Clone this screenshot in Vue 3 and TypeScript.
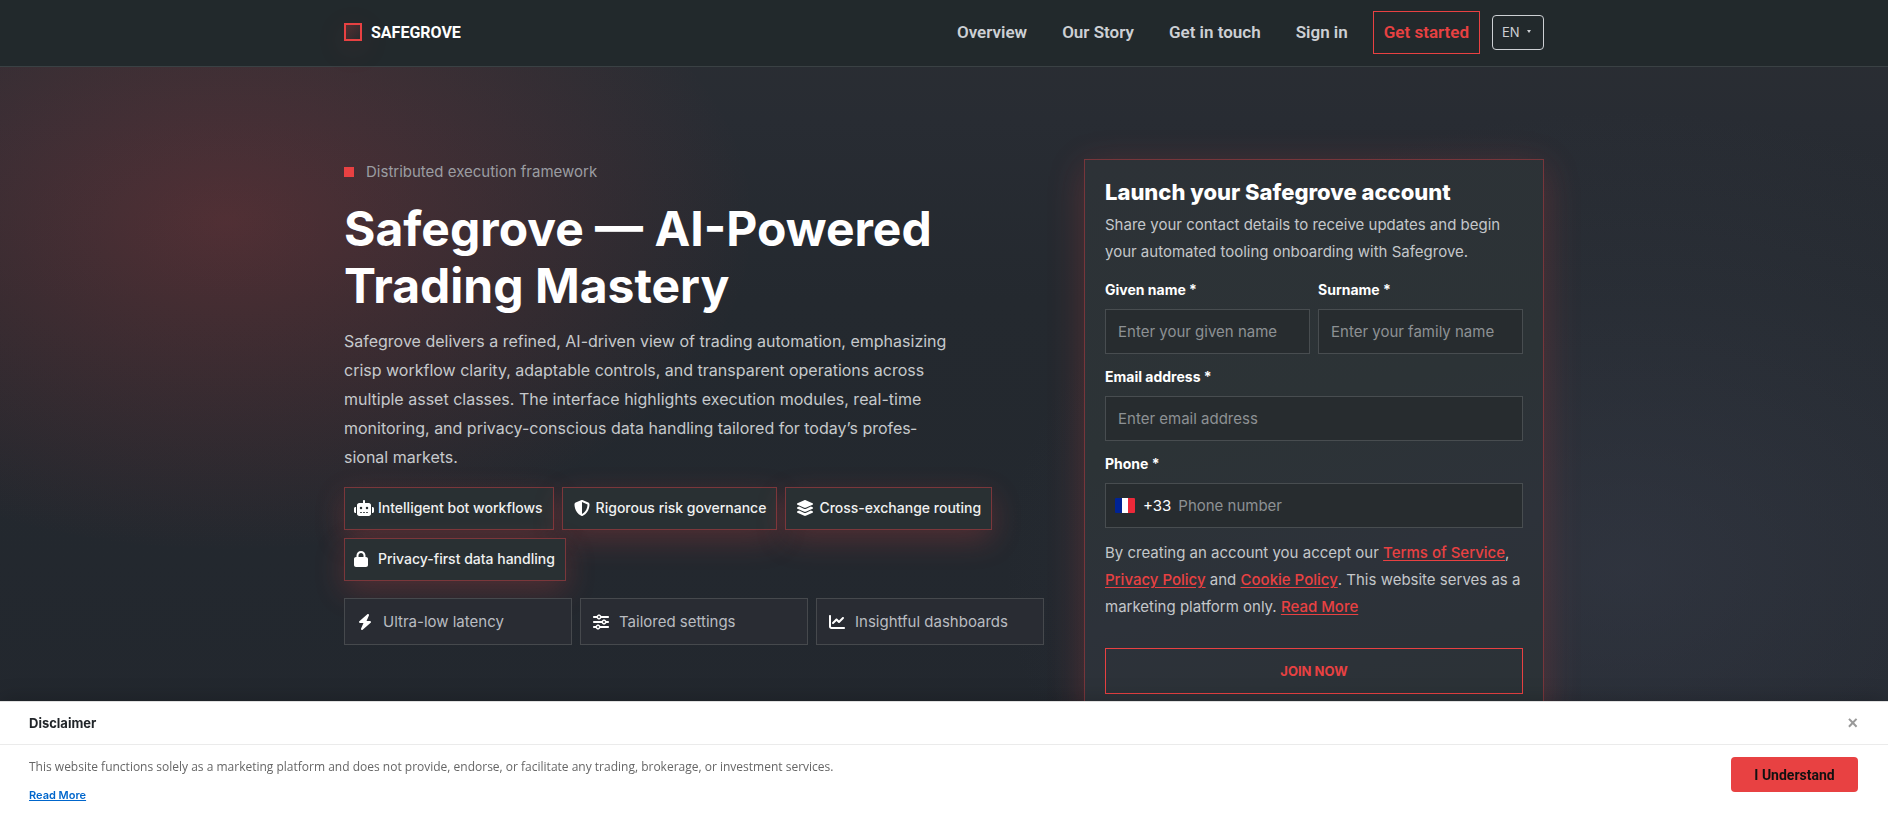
<script setup lang="ts">
import { ref } from 'vue'

interface Feature {
  label: string
  box: string
  path: string
}

const navLinks: string[] = ['Overview', 'Our Story', 'Get in touch', 'Sign in']

const chips: Feature[] = [
  {
    label: 'Intelligent bot workflows',
    box: '0 0 640 512',
    path: 'M320 0c17.7 0 32 14.3 32 32V96H472c39.8 0 72 32.2 72 72V440c0 39.8-32.2 72-72 72H168c-39.8 0-72-32.2-72-72V168c0-39.8 32.2-72 72-72H288V32c0-17.7 14.3-32 32-32zM208 384c-8.8 0-16 7.2-16 16s7.2 16 16 16h32c8.8 0 16-7.2 16-16s-7.2-16-16-16H208zm96 0c-8.8 0-16 7.2-16 16s7.2 16 16 16h32c8.8 0 16-7.2 16-16s-7.2-16-16-16H304zm96 0c-8.8 0-16 7.2-16 16s7.2 16 16 16h32c8.8 0 16-7.2 16-16s-7.2-16-16-16H400zM264 256a40 40 0 1 0 -80 0 40 40 0 1 0 80 0zm152 40a40 40 0 1 0 0-80 40 40 0 1 0 0 80zM48 224H64V416H48c-26.5 0-48-21.5-48-48V272c0-26.5 21.5-48 48-48zm544 0c26.5 0 48 21.5 48 48v96c0 26.5-21.5 48-48 48H576V224h16z',
  },
  {
    label: 'Rigorous risk governance',
    box: '0 0 512 512',
    path: 'M256 0c4.6 0 9.2 1 13.4 2.9L457.7 82.8c22 9.3 38.4 31 38.3 57.2c-.5 99.2-41.3 280.7-213.6 363.2c-16.7 8-36.1 8-52.8 0C57.3 420.7 16.5 239.2 16 140c-.1-26.2 16.3-47.9 38.3-57.2L242.7 2.9C246.8 1 251.4 0 256 0zm0 66.8V444.8C394 378 431.1 230.1 432 141.4L256 66.8l0 0z',
  },
  {
    label: 'Cross-exchange routing',
    box: '0 0 576 512',
    path: 'M264.5 5.2c14.9-6.9 32.1-6.9 47 0l218.6 101c8.5 3.9 13.9 12.4 13.9 21.8s-5.4 17.9-13.9 21.8l-218.6 101c-14.9 6.9-32.1 6.9-47 0L45.9 149.8C37.4 145.8 32 137.3 32 128s5.4-17.9 13.9-21.8L264.5 5.2zM476.9 209.6l53.2 24.6c8.5 3.9 13.9 12.4 13.9 21.8s-5.4 17.9-13.9 21.8l-218.6 101c-14.9 6.9-32.1 6.9-47 0L45.9 277.8C37.4 273.8 32 265.3 32 256s5.4-17.9 13.9-21.8l53.2-24.6 152 70.2c23.4 10.8 50.4 10.8 73.8 0l152-70.2zm-152 198.2l152-70.2 53.2 24.6c8.5 3.9 13.9 12.4 13.9 21.8s-5.4 17.9-13.9 21.8l-218.6 101c-14.9 6.9-32.1 6.9-47 0L45.9 405.8C37.4 401.8 32 393.3 32 384s5.4-17.9 13.9-21.8l53.2-24.6 152 70.2c23.4 10.8 50.4 10.8 73.8 0z',
  },
  {
    label: 'Privacy-first data handling',
    box: '0 0 640 512',
    path: 'M144 144v48H304V144c0-44.2-35.8-80-80-80s-80 35.8-80 80zM80 192V144C80 64.5 144.5 0 224 0s144 64.5 144 144v48h16c35.3 0 64 28.7 64 64V448c0 35.3-28.7 64-64 64H64c-35.3 0-64-28.7-64-64V256c0-35.3 28.7-64 64-64H80z',
  },
]

const tiles: Feature[] = [
  {
    label: 'Ultra-low latency',
    box: '0 0 448 512',
    path: 'M349.4 44.6c5.9-13.7 1.5-29.7-10.6-38.5s-28.6-8-39.9 1.8l-256 224c-10 8.8-13.6 22.9-8.9 35.3S50.7 288 64 288H175.5L98.6 467.4c-5.9 13.7-1.5 29.7 10.6 38.5s28.6 8 39.9-1.8l256-224c10-8.8 13.6-22.9 8.9-35.3s-16.6-20.7-30-20.7H272.5L349.4 44.6z',
  },
  {
    label: 'Tailored settings',
    box: '0 0 512 512',
    path: 'M0 416c0 17.7 14.3 32 32 32l54.7 0c12.3 28.3 40.5 48 73.3 48s61-19.7 73.3-48L480 448c17.7 0 32-14.3 32-32s-14.3-32-32-32l-246.7 0c-12.3-28.3-40.5-48-73.3-48s-61 19.7-73.3 48L32 384c-17.7 0-32 14.3-32 32zm128 0a32 32 0 1 1 64 0 32 32 0 1 1 -64 0zM320 256a32 32 0 1 1 64 0 32 32 0 1 1 -64 0zm32-80c-32.8 0-61 19.7-73.3 48L32 224c-17.7 0-32 14.3-32 32s14.3 32 32 32l246.7 0c12.3 28.3 40.5 48 73.3 48s61-19.7 73.3-48l54.7 0c17.7 0 32-14.3 32-32s-14.3-32-32-32l-54.7 0c-12.3-28.3-40.5-48-73.3-48zM192 128a32 32 0 1 1 0-64 32 32 0 1 1 0 64zm73.3-64C253 35.7 224.8 16 192 16s-61 19.7-73.3 48L32 64C14.3 64 0 78.3 0 96s14.3 32 32 32l86.7 0c12.3 28.3 40.5 48 73.3 48s61-19.7 73.3-48L480 128c17.7 0 32-14.3 32-32s-14.3-32-32-32L265.3 64z',
  },
  {
    label: 'Insightful dashboards',
    box: '0 0 512 512',
    path: 'M64 64c0-17.7-14.3-32-32-32S0 46.3 0 64V400c0 44.2 35.8 80 80 80H480c17.7 0 32-14.3 32-32s-14.3-32-32-32H80c-8.8 0-16-7.2-16-16V64zm406.6 86.6c12.5-12.5 12.5-32.8 0-45.3s-32.8-12.5-45.3 0L320 210.7l-57.4-57.4c-12.5-12.5-32.8-12.5-45.3 0l-112 112c-12.5 12.5-12.5 32.8 0 45.3s32.8 12.5 45.3 0L240 221.3l57.4 57.4c12.5 12.5 32.8 12.5 45.3 0l128-128z',
  },
]

const language = ref('EN')
const form = ref({ given: '', family: '', email: '', phone: '' })
const disclaimerOpen = ref(true)
</script>

<template>
  <div class="page">
    <header class="site-header">
      <div class="container header-row">
        <a class="brand" href="#">
          <span class="brand-mark"></span>
          <span>SAFEGROVE</span>
        </a>
        <nav class="nav">
          <a v-for="link in navLinks" :key="link" class="nav-link" href="#">{{ link }}</a>
          <a class="nav-link nav-cta" href="#">Get started</a>
          <div class="language">
            <select v-model="language" class="language-select" aria-label="Language">
              <option>EN</option>
              <option>FR</option>
            </select>
            <svg class="language-caret" viewBox="0 0 4 3" aria-hidden="true"><path d="M0 0h4L2 3z" /></svg>
          </div>
        </nav>
      </div>
    </header>

    <main class="container hero">
      <section class="intro">
        <p class="eyebrow"><span class="eyebrow-mark"></span>Distributed execution framework</p>
        <h1 class="title">Safegrove — AI-Powered Trading Mastery</h1>
        <p class="lead">
          Safegrove delivers a refined, AI-driven view of trading automation, emphasizing crisp
          workflow clarity, adaptable controls, and transparent operations across multiple asset
          classes. The interface highlights execution modules, real-time monitoring, and
          privacy-conscious data handling tailored for today’s profes&shy;sional markets.
        </p>
        <ul class="chips">
          <li v-for="chip in chips" :key="chip.label" class="chip">
            <svg class="icon" :viewBox="chip.box" aria-hidden="true"><path :d="chip.path" /></svg>
            <span>{{ chip.label }}</span>
          </li>
        </ul>
        <ul class="tiles">
          <li v-for="tile in tiles" :key="tile.label" class="tile">
            <svg class="icon" :viewBox="tile.box" aria-hidden="true"><path :d="tile.path" /></svg>
            <span>{{ tile.label }}</span>
          </li>
        </ul>
      </section>

      <form class="card" @submit.prevent>
        <h2 class="card-title">Launch your Safegrove account</h2>
        <p class="card-text">
          Share your contact details to receive updates and begin your automated tooling onboarding
          with Safegrove.
        </p>
        <div class="fields">
          <div class="field">
            <label for="given">Given name *</label>
            <input id="given" v-model="form.given" class="control" type="text" placeholder="Enter your given name" />
          </div>
          <div class="field">
            <label for="family">Surname *</label>
            <input id="family" v-model="form.family" class="control" type="text" placeholder="Enter your family name" />
          </div>
          <div class="field wide">
            <label for="email">Email address *</label>
            <input id="email" v-model="form.email" class="control" type="email" placeholder="Enter email address" />
          </div>
          <div class="field wide">
            <label for="phone">Phone *</label>
            <div class="control phone">
              <button class="country" type="button" aria-label="Country code, France">
                <svg class="flag" viewBox="0 0 20 15" aria-hidden="true">
                  <path fill="#002395" d="M0 0h7v15H0z" />
                  <path fill="#fff" d="M7 0h6v15H7z" />
                  <path fill="#ed2939" d="M13 0h7v15h-7z" />
                </svg>
                +33
              </button>
              <input id="phone" v-model="form.phone" class="phone-input" type="tel" placeholder="Phone number" />
            </div>
          </div>
        </div>
        <p class="terms">
          By creating an account you accept our <a href="#">Terms of Service</a>,
          <a href="#">Privacy Policy</a> and <a href="#">Cookie Policy</a>. This website serves as a
          marketing platform only. <a href="#">Read More</a>
        </p>
        <button class="submit" type="submit">JOIN NOW</button>
      </form>
    </main>

    <aside v-if="disclaimerOpen" class="disclaimer" aria-labelledby="disclaimer-title">
      <div class="disclaimer-head">
        <h3 id="disclaimer-title">Disclaimer</h3>
        <button class="close" type="button" aria-label="Close" @click="disclaimerOpen = false">×</button>
      </div>
      <div class="disclaimer-body">
        <div class="disclaimer-copy">
          <p>
            This website functions solely as a marketing platform and does not provide, endorse, or
            facilitate any trading, brokerage, or investment services.
          </p>
          <a href="#">Read More</a>
        </div>
        <button class="accept" type="button" @click="disclaimerOpen = false">I Understand</button>
      </div>
    </aside>
  </div>
</template>

<style>
body {
  margin: 0;
  background: #23282f;
}
</style>

<style scoped>
.page {
  --red: #e84142;
  box-sizing: border-box;
  min-height: 100vh;
  color: #fff;
  font-family: Inter, "Liberation Sans", sans-serif;
  font-size: 15px;
  background:
    radial-gradient(ellipse 530px 330px at 12% 222px, rgba(232, 65, 66, 0.22), rgba(232, 65, 66, 0) 100%),
    radial-gradient(ellipse 620px 460px at 86% 570px, rgba(70, 74, 92, 0.34), rgba(70, 74, 92, 0) 100%),
    linear-gradient(180deg, #2b2e33 0, #282c33 120px, #24292f 300px, #22272e 100%);
}
.page *,
.page *::before {
  box-sizing: border-box;
}
p,
h1,
h2,
h3,
ul {
  margin: 0;
  padding: 0;
}
ul {
  list-style: none;
}
button,
input,
select {
  font: inherit;
  color: inherit;
}
.container {
  width: 100%;
  max-width: 1200px;
  margin: 0 auto;
}

.site-header {
  background: #22292c;
  border-bottom: 1px solid #3a4144;
}
.header-row {
  display: flex;
  align-items: center;
  justify-content: space-between;
  min-height: 66px;
  padding-bottom: 2px;
}
.brand {
  display: flex;
  align-items: center;
  gap: 9px;
  color: #fff;
  font-family: Roboto, sans-serif;
  font-size: 16px;
  font-weight: 700;
  text-decoration: none;
}
.brand-mark {
  width: 18px;
  height: 18px;
  border: 2px solid var(--red);
  background: linear-gradient(135deg, rgba(232, 65, 66, 0.25), rgba(232, 65, 66, 0.04));
  box-shadow: 0 8px 32px rgba(232, 65, 66, 0.14);
}
.nav {
  display: flex;
  align-items: center;
  gap: 15px;
}
.nav-link {
  padding: 0 10px;
  color: #cdd0d4;
  font-family: Roboto, sans-serif;
  font-size: 17px;
  font-weight: 600;
  line-height: 41px;
  text-decoration: none;
}
.nav-cta {
  border: 1px solid var(--red);
  color: var(--red);
}
.language {
  position: relative;
  margin-left: -3px;
}
.language-select {
  display: block;
  width: 52px;
  height: 35px;
  padding: 0 0 0 9px;
  border: 1px solid #cdd0d4;
  border-radius: 4px;
  background: transparent;
  color: #cdd0d4;
  font-size: 13px;
  appearance: none;
}
.language-caret {
  position: absolute;
  top: 15px;
  right: 13px;
  width: 4px;
  height: 3px;
  fill: #cdd0d4;
  pointer-events: none;
}

.hero {
  display: grid;
  grid-template-columns: minmax(0, 700fr) minmax(0, 460fr);
  align-items: start;
  gap: 40px;
  padding: 92px 0 100px;
}
.eyebrow {
  display: flex;
  align-items: center;
  gap: 12px;
  color: #9b9da2;
  line-height: 25px;
}
.eyebrow-mark {
  width: 10px;
  height: 10px;
  background: var(--red);
}
.title {
  margin-top: 16px;
  font-size: 48px;
  font-weight: 700;
  line-height: 57px;
}
.lead {
  max-width: 608px;
  margin-top: 13px;
  color: #c6c9cc;
  font-size: 16px;
  line-height: 29px;
}
.chips {
  display: flex;
  flex-wrap: wrap;
  gap: 8px;
  margin-top: 15px;
}
.chip {
  display: flex;
  align-items: center;
  gap: 4px;
  padding: 7px 10px 9px 9px;
  border: 1px solid #7b373b;
  background: #293033;
  box-shadow: 0 10px 30px rgba(232, 65, 66, 0.24);
  font-size: 14px;
  font-weight: 500;
  line-height: 25px;
  color: #f0f1f1;
}
.icon {
  width: 20px;
  height: 16px;
  fill: #fff;
}
.tiles {
  display: grid;
  grid-template-columns: repeat(3, minmax(0, 1fr));
  gap: 8px;
  margin-top: 17px;
}
.tile {
  display: flex;
  align-items: center;
  gap: 8px;
  padding: 9px 10px;
  border: 1px solid #46494d;
  background: #292c33;
  color: #b9bcc1;
  line-height: 27px;
}

.card {
  padding: 19px 20px 20px;
  border: 1px solid #77363b;
  background: linear-gradient(165deg, #2d3237 0, #2c3336 45%, #2d323a 70%, #2b3236 100%);
  box-shadow: 0 8px 34px rgba(232, 65, 66, 0.24);
}
.card-title {
  font-size: 22px;
  font-weight: 800;
  line-height: 26px;
}
.card-text,
.terms {
  color: #c4c7ca;
  line-height: 27px;
}
.card-text {
  margin: 6px 0 15px;
}
.fields {
  display: grid;
  grid-template-columns: repeat(2, minmax(0, 1fr));
  gap: 13px 8px;
}
.field {
  display: flex;
  flex-direction: column;
  gap: 9px;
}
.wide {
  grid-column: 1 / -1;
}
.field label {
  font-size: 14px;
  font-weight: 700;
  line-height: 20px;
}
.control {
  width: 100%;
  height: 45px;
  padding: 0 12px;
  border: 1px solid #484d50;
  border-radius: 0;
  background: #272c2f;
}
.control::placeholder,
.phone-input::placeholder {
  color: #8d9194;
  opacity: 1;
}
.phone {
  display: flex;
  align-items: center;
  gap: 7px;
  padding-left: 9px;
}
.country {
  display: flex;
  align-items: center;
  gap: 8px;
  padding: 0;
  border: 0;
  background: none;
}
.flag {
  width: 20px;
  height: 15px;
  border-radius: 1px;
}
.phone-input {
  flex: 1;
  min-width: 0;
  padding: 0;
  border: 0;
  outline: 0;
  background: none;
}
.terms {
  margin-top: 11px;
}
.terms a {
  color: var(--red);
  font-weight: 500;
  text-underline-offset: 2px;
}
.submit {
  width: 100%;
  height: 46px;
  margin-top: 28px;
  border: 1px solid var(--red);
  background: transparent;
  color: var(--red);
  font-size: 13px;
  font-weight: 700;
}

.disclaimer {
  position: fixed;
  right: 0;
  bottom: 0;
  left: 0;
  border-top: 1px solid #e0e0e0;
  background: #fff;
  box-shadow: 0 -2px 20px rgba(0, 0, 0, 0.2);
  color: #212529;
}
.disclaimer-head {
  display: flex;
  align-items: center;
  justify-content: space-between;
  padding: 11px 30px 11px 29px;
  border-bottom: 1px solid #ebebeb;
}
.disclaimer-head h3 {
  font-size: 13px;
  font-weight: 700;
  line-height: 20px;
}
.close {
  padding: 0;
  border: 0;
  background: none;
  color: #999;
  font-family: "Liberation Sans", sans-serif;
  font-size: 18px;
  font-weight: 700;
  line-height: 20px;
}
.disclaimer-body {
  display: flex;
  align-items: flex-start;
  justify-content: space-between;
  gap: 24px;
  padding: 12px 30px 13px 29px;
}
.disclaimer-copy {
  display: grid;
  gap: 8px;
  color: #666;
  font-family: "Open Sans", sans-serif;
  font-size: 12px;
  line-height: 20px;
}
.disclaimer-copy a {
  justify-self: start;
  color: #0066cc;
  font-family: Inter, sans-serif;
  font-size: 11px;
  font-weight: 600;
}
.accept {
  min-width: 127px;
  height: 35px;
  border: 0;
  border-radius: 4px;
  background: var(--red);
  color: #111;
  font-family: Roboto, sans-serif;
  font-size: 14px;
  font-weight: 700;
}
</style>
